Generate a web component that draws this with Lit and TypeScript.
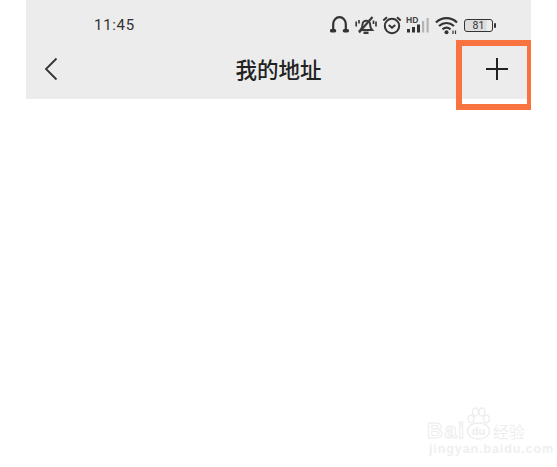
import { LitElement, html, css, svg } from "lit";
import { customElement } from "lit/decorators.js";

const icons = {
  headset: svg`<svg class="i" width="22" height="20" viewBox="0 0 22 20" fill="none" stroke="#333" stroke-width="2.200"><path d="M3.200 15.500V9a6.300 6.800 0 0 1 12.600 0v6.500"/><path d="M1.600 15.800h3M14.400 15.800h3" stroke-width="3.400" stroke-linecap="round"/></svg>`,
  mute: svg`<svg class="i" width="24" height="20" viewBox="0 0 24 20" fill="none" stroke="#3a3a3a" stroke-width="2"><path d="M5.500 15c1.500-1.500 2-3.500 2-5.500a3.800 3.800 0 0 1 7.600 0c0 2.500 1 4.500 2 5.500z"/><path d="M8.500 17.800h5" stroke-width="2.400"/><path d="M4 17.500 17.500 2" stroke-width="2.200"/><path d="M1.200 6.500v5M4 5v3.500M18.500 5.500v3.500M21 6.500v5" stroke-width="1.700"/></svg>`,
  alarm: svg`<svg class="i" width="20" height="20" viewBox="0 0 20 20" fill="none" stroke="#333" stroke-width="2"><circle cx="10" cy="11" r="7.200"/><path d="M6.800 10l3.200 2.700L13.200 10M1.300 5.500 5 2.300M15 2.300l3.700 3.200"/></svg>`,
  signal: svg`<svg class="i" width="27" height="20" viewBox="0 0 27 20"><text x="1" y="8" font-family="Liberation Sans" font-size="8.500" font-weight="700" fill="#444">HD</text><g fill="#333"><rect x="2" y="14" width="3" height="3.500"/><rect x="7" y="12" width="3" height="5.500"/><rect x="12" y="9.500" width="3" height="8"/></g><g fill="#b4b4b4"><rect x="17" y="6" width="2.200" height="11.500"/><rect x="21.500" y="3" width="2.200" height="14.500"/></g></svg>`,
  wifi: svg`<svg class="i" width="26" height="20" viewBox="0 0 26 20" fill="none" stroke="#333" stroke-width="2.200"><path d="M1 7.500c6-5.800 15-5.800 21 0M4 11c4.500-4 10.500-4 15 0M7.500 14.300c2.500-2 5.500-2 8 0"/><circle cx="11.500" cy="17.300" r="2" fill="#333" stroke="none"/><path d="M18 15.500v3.500M20.500 15.500v3.500" stroke-width="1.200"/></svg>`,
};

@customElement("app-root")
export class AppRoot extends LitElement {
  static styles = css`
    :host {
      display: block;
      position: relative;
      width: 557px;
      height: 467px;
      overflow: hidden;
      background: #fff;
      font-family: Roboto, "Noto Sans CJK SC", sans-serif;
    }
    .page { padding: 0 26px; }
    .header {
      height: 99px;
      background: #ececec;
      display: flex;
      flex-direction: column;
    }
    .status {
      height: 50px;
      display: flex;
      align-items: center;
      padding: 0 35px 0 68px;
    }
    .time {
      font-size: 15px;
      font-weight: 400;
      letter-spacing: 0.7px;
      color: #333;
      flex: 1;
    }
    .icons { display: flex; align-items: center; gap: 3px; }
    .i { display: block; flex: none; }
    .battery { display: flex; align-items: center; gap: 1px; }
    .battery-body {
      width: 27px;
      height: 11px;
      border: 1.5px solid #333;
      border-radius: 3px;
      display: flex;
      align-items: center;
      justify-content: center;
      font-size: 10.5px;
      color: #333;
      background: linear-gradient(#ddd, #ddd) left / 80% 100% no-repeat;
    }
    .battery-tip { width: 2px; height: 5px; background: #333; border-radius: 1px; }
    .nav {
      flex: 1;
      display: grid;
      grid-template-columns: 1fr auto 1fr;
      align-items: center;
      padding: 0 22px 12px 18px;
    }
    .back { display: block; }
    .title {
      font-size: 21.5px;
      line-height: 24px;
      font-weight: 500;
      color: #222;
      font-family: "Noto Sans CJK SC", sans-serif;
      margin-left: 4px;
    }
    .plus { justify-self: end; display: block; }
    .mark {
      position: absolute;
      left: 456px;
      top: 40px;
      width: 75px;
      height: 70px;
      box-sizing: border-box;
      border: 6px solid #f97340;
      border-right-width: 4px;
    }
    .wm {
      position: absolute;
      left: 427px;
      top: 406px;
      width: 112px;
      color: #fff;
      font-family: "Liberation Sans", sans-serif;
    }
    .wm-top { display: flex; align-items: flex-end; height: 35px; }
    .wm-b {
      font-size: 22px;
      line-height: 20px;
      font-weight: 700;
      -webkit-text-stroke: 1px #ededed;
      letter-spacing: 1.5px;
    }
    .wm-cn {
      font-family: "Noto Sans CJK SC", sans-serif;
      font-size: 16px;
      line-height: 20px;
      color: #efefef;
      margin-left: 2px;
      white-space: nowrap;
    }
    .wm-url {
      margin-top: 2px;
      margin-left: 2px;
      font-size: 12.5px;
      line-height: 13px;
      font-weight: 700;
      letter-spacing: 0.9px;
      color: #efefef;
      white-space: nowrap;
    }
  `;

  render() {
    return html`
      <div class="page">
        <div class="header">
          <div class="status">
            <span class="time">11:45</span>
            <div class="icons">
              ${icons.headset}${icons.mute}${icons.alarm}${icons.signal}${icons.wifi}
              <div class="battery">
                <div class="battery-body">81</div>
                <div class="battery-tip"></div>
              </div>
            </div>
          </div>
          <div class="nav">
            <svg class="back" width="14" height="24" viewBox="0 0 14 24" fill="none" stroke="#333" stroke-width="1.800"><path d="M12.500 1.500 2 12l10.500 10.500"/></svg>
            <span class="title">我的地址</span>
            <svg class="plus" width="24" height="24" viewBox="0 0 24 24" stroke="#222" stroke-width="2"><path d="M12 1v22M1 12h22"/></svg>
          </div>
        </div>
      </div>
      <div class="mark"></div>
      <div class="wm">
        <div class="wm-top">
          <span class="wm-b">Bai</span>
          <svg width="25" height="35" viewBox="0 0 25 35" fill="#fff" stroke="#ededed" stroke-width="1.300"><ellipse cx="12.500" cy="25" rx="11" ry="8"/><ellipse cx="5" cy="13" rx="2.800" ry="3.800"/><ellipse cx="9.500" cy="6" rx="3" ry="4"/><ellipse cx="16" cy="6" rx="3" ry="4"/><ellipse cx="20.500" cy="13" rx="2.800" ry="3.800"/><text x="12.500" y="29" text-anchor="middle" font-family="Liberation Sans" font-size="11" font-weight="700" fill="#ededed" stroke="none">du</text></svg>
          <span class="wm-cn">经验</span>
        </div>
        <div class="wm-url">jingyan.baidu.com</div>
      </div>
    `;
  }
}
